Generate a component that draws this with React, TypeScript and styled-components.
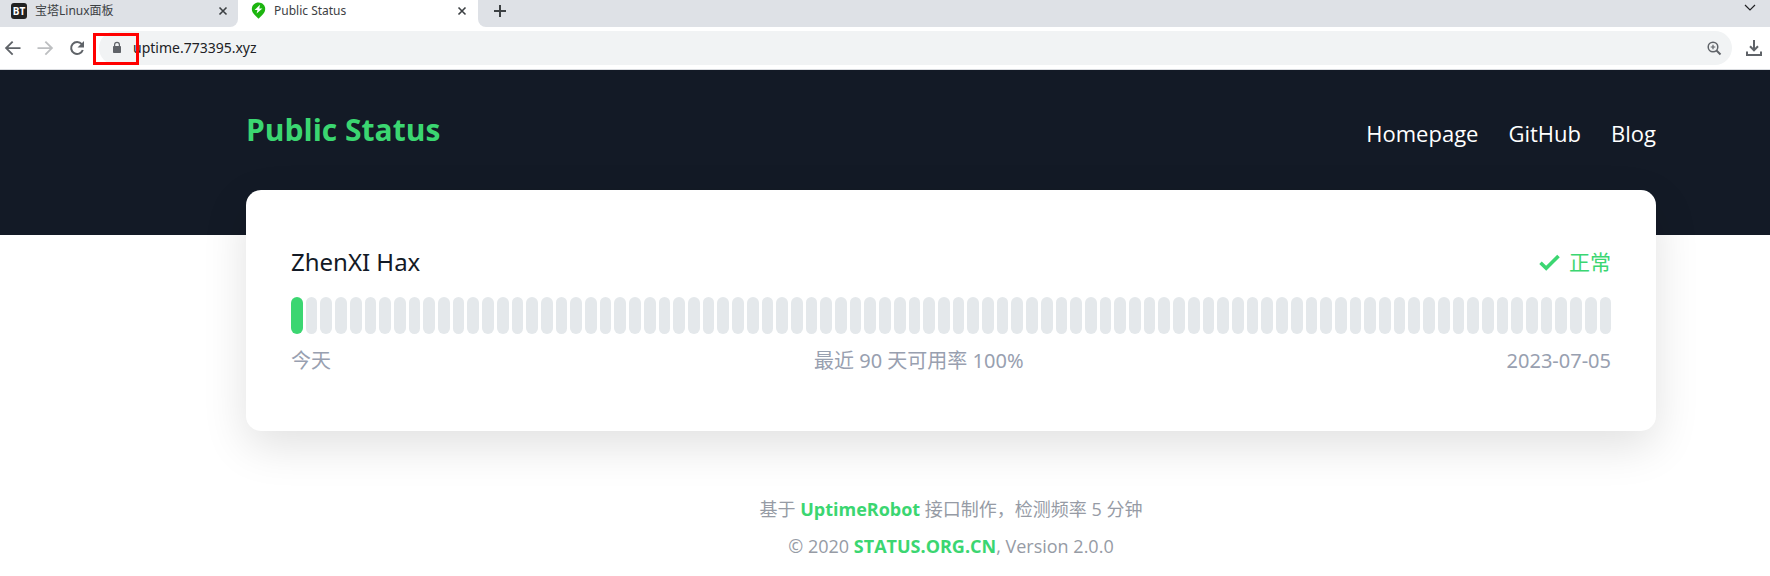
import React from "react";
import styled, { createGlobalStyle } from "styled-components";

const GlobalStyle = createGlobalStyle`
  * { box-sizing: border-box; }
  body {
    margin: 0;
    background: #fff;
    font-family: "Noto Sans", "Noto Sans CJK SC", sans-serif;
  }
  button { border: 0; padding: 0; background: none; font: inherit; color: inherit; }
`;

const TabStrip = styled.div`
  display: flex;
  height: 27px;
  background: #fff;
  color: #3c4043;
`;

const Tab = styled.div<{ $active?: boolean }>`
  display: flex;
  flex: 0 0 auto;
  align-items: center;
  width: ${(p) => (p.$active ? 240 : 238)}px;
  height: 27px;
  padding: 0 ${(p) => (p.$active ? 11 : 10)}px 6px ${(p) => (p.$active ? 13 : 11)}px;
  background: ${(p) => (p.$active ? "#fff" : "#dee1e6")};
  border-bottom-right-radius: ${(p) => (p.$active ? 0 : 8)}px;
`;

const TabTitle = styled.span`
  flex: 1;
  margin-left: 8px;
  font-size: 12px;
  line-height: 20px;
  white-space: nowrap;
`;

const StripRest = styled.div`
  display: flex;
  flex: 1;
  align-items: center;
  justify-content: space-between;
  padding: 0 13px 6px 15px;
  background: #dee1e6;
  border-bottom-left-radius: 8px;
`;

const IconButton = styled.button<{ $color?: string }>`
  display: flex;
  flex: 0 0 auto;
  color: ${(p) => p.$color ?? "#5f6368"};
`;

const Toolbar = styled.div`
  position: relative;
  display: flex;
  align-items: center;
  height: 43px;
  padding: 0 7px 0 4px;
  border-bottom: 1px solid #dadce0;
`;

const NavButtons = styled.div`
  display: flex;
  gap: 14px;
  margin-right: 13px;
`;

const AddressBar = styled.div`
  display: flex;
  flex: 1;
  align-items: center;
  height: 34px;
  margin-right: 13px;
  padding: 0 10px 0 12px;
  border-radius: 17px;
  background: #f1f3f4;
  color: #5f6368;
`;

const AddressInput = styled.input`
  flex: 1;
  min-width: 0;
  margin-left: 10px;
  padding: 0;
  border: 0;
  outline: 0;
  background: transparent;
  color: #202124;
  font-family: inherit;
  font-size: 14px;
  line-height: 20px;
`;

const Highlight = styled.div`
  position: absolute;
  left: 93px;
  top: 6px;
  width: 46px;
  height: 32px;
  border: 3px solid #f00;
`;

const Header = styled.header`
  height: 165px;
  padding: 0 114px 0 246px;
  background: #131a26;
`;

const HeaderRow = styled.div`
  display: flex;
  align-items: center;
  justify-content: space-between;
  height: 120px;
`;

const Title = styled.h1`
  margin: 0;
  color: #3bd671;
  font-family: "Open Sans", sans-serif;
  font-size: 30px;
  line-height: 40px;
  font-weight: 700;
`;

const SiteNav = styled.nav`
  display: flex;
  gap: 30px;
  padding-top: 6px;
`;

const SiteLink = styled.a`
  color: #fff;
  font-family: "Open Sans", sans-serif;
  font-size: 22px;
  line-height: 30px;
  text-decoration: none;
`;

const Main = styled.main`
  padding: 0 114px 0 246px;
  margin-top: -45px;
`;

const Card = styled.section`
  padding: 55px 45px 55px;
  border-radius: 15px;
  background: #fff;
  box-shadow: 0 15px 45px rgba(0, 0, 0, 0.12);
`;

const Row = styled.div`
  display: flex;
  align-items: center;
  justify-content: space-between;
`;

const SiteName = styled.h2`
  margin: 0;
  color: #131a26;
  font-size: 24px;
  line-height: 34px;
  font-weight: 400;
`;

const StatusLabel = styled.span`
  display: flex;
  align-items: center;
  gap: 9px;
  color: #3bd671;
  font-size: 21px;
  line-height: 34px;
`;

const Timeline = styled.div`
  display: flex;
  gap: 3px;
  height: 37px;
  margin: 18px 0 12px;
`;

const Day = styled.span<{ $up?: boolean }>`
  flex: 1;
  border-radius: 6px;
  background: ${(p) => (p.$up ? "#3bd671" : "#e4e8eb")};
`;

const Summary = styled(Row)`
  color: #98a0b0;
  font-size: 20px;
  line-height: 30px;
`;

const Footer = styled.footer`
  margin-top: 60px;
  color: #969ba5;
  font-family: "Open Sans", "Noto Sans CJK SC", sans-serif;
  font-size: 18px;
  line-height: 37px;
  text-align: center;

  p { margin: 0; }
  a { color: #3bd671; font-weight: 700; text-decoration: none; }
`;

const CloseIcon = () => (
  <svg width="10" height="10" viewBox="0 0 10 10" stroke="currentColor" strokeWidth="1.6">
    <path d="M1.5 1.5l7 7M8.5 1.5l-7 7" />
  </svg>
);

const PanelLogo = styled.span`
  width: 16px;
  height: 16px;
  border-radius: 3px;
  background: #222;
  color: #fff;
  font-size: 10px;
  line-height: 16px;
  font-weight: 700;
  text-align: center;
`;

const PinLogo = () => (
  <svg width="15" height="17" viewBox="0 0 15 17">
    <path d="M7.5 0.5C3.6.5.8 3.4.8 6.9c0 2.8 1.5 4.5 3.4 6.6l3.3 3.3 3.3-3.3c1.900-2.100 3.400-3.800 3.400-6.600C14.200 3.400 11.400.5 7.500.5z" fill="#1db510" />
    <path d="M9 2.800L3.600 8h2.900l-.9 3.600L11.400 6.400H8.300z" fill="#fff" />
  </svg>
);

const arrow = "M16.500 7.200H4.300l5-5L8 .9.800 8.100 8 15.300l1.300-1.300-5-5h12.200z";

export default function App() {
  return (
    <>
      <GlobalStyle />
      <TabStrip>
        <Tab>
          <PanelLogo>BT</PanelLogo>
          <TabTitle>宝塔Linux面板</TabTitle>
          <IconButton aria-label="Close tab" $color="#3c4043"><CloseIcon /></IconButton>
        </Tab>
        <Tab $active>
          <PinLogo />
          <TabTitle>Public Status</TabTitle>
          <IconButton aria-label="Close tab" $color="#3c4043"><CloseIcon /></IconButton>
        </Tab>
        <StripRest>
          <IconButton aria-label="New tab" $color="#3c4043">
            <svg width="14" height="14" viewBox="0 0 14 14" stroke="currentColor" strokeWidth="2">
              <path d="M7 1v12M1 7h12" />
            </svg>
          </IconButton>
          <IconButton aria-label="Search tabs" $color="#202124">
            <svg width="14" height="14" viewBox="0 0 14 14" fill="none" stroke="currentColor" strokeWidth="1.200">
              <path d="M2 1l5 5 5-5" />
            </svg>
          </IconButton>
        </StripRest>
      </TabStrip>

      <Toolbar>
        <NavButtons>
          <IconButton aria-label="Back">
            <svg width="18" height="16" viewBox="0 0 18 16" fill="currentColor"><path d={arrow} /></svg>
          </IconButton>
          <IconButton aria-label="Forward" $color="#bdbfc1">
            <svg width="18" height="16" viewBox="0 0 18 16" fill="currentColor">
              <path d={arrow} transform="matrix(-1 0 0 1 18 0)" />
            </svg>
          </IconButton>
          <IconButton aria-label="Reload">
            <svg width="18" height="16" viewBox="0 0 18 16">
              <path d="M13.800 4.200A6 6 0 1 0 14.800 10" fill="none" stroke="currentColor" strokeWidth="2" />
              <path d="M16 1v6.500H9.500z" fill="currentColor" />
            </svg>
          </IconButton>
        </NavButtons>
        <AddressBar>
          <IconButton aria-label="View site information">
            <svg width="12" height="14" viewBox="0 0 12 14">
              <rect x="2" y="5" width="8" height="7" rx="0.800" fill="currentColor" />
              <path d="M3.600 5V3.700a2.400 2.400 0 0 1 4.800 0V5" fill="none" stroke="currentColor" strokeWidth="1.200" />
            </svg>
          </IconButton>
          <AddressInput aria-label="Address" defaultValue="uptime.773395.xyz" />
          <IconButton aria-label="Zoom">
            <svg width="16" height="16" viewBox="0 0 16 16" fill="none" stroke="currentColor" strokeWidth="1.500">
              <circle cx="7" cy="7" r="4.800" />
              <path d="M10.500 10.500l4 4" strokeWidth="2" />
              <path d="M7 4.700v4.600M4.700 7h4.600" strokeWidth="1.200" />
            </svg>
          </IconButton>
        </AddressBar>
        <IconButton aria-label="Downloads">
          <svg width="18" height="18" viewBox="0 0 18 18" fill="none" stroke="currentColor" strokeWidth="2">
            <path d="M9 1v10M5 7.300l4 4 4-4M2 12.500V16h14v-3.500" />
          </svg>
        </IconButton>
        <Highlight />
      </Toolbar>

      <Header>
        <HeaderRow>
          <Title>Public Status</Title>
          <SiteNav>
            <SiteLink href="#home">Homepage</SiteLink>
            <SiteLink href="#github">GitHub</SiteLink>
            <SiteLink href="#blog">Blog</SiteLink>
          </SiteNav>
        </HeaderRow>
      </Header>

      <Main>
        <Card>
          <Row>
            <SiteName>ZhenXI Hax</SiteName>
            <StatusLabel>
              <svg width="21" height="17" viewBox="0 0 21 17" fill="none" stroke="currentColor" strokeWidth="3.600">
                <path d="M1.500 8.800l5.700 5.400L19.500 2" />
              </svg>
              正常
            </StatusLabel>
          </Row>
          <Timeline>
            {Array.from({ length: 90 }, (_, i) => <Day key={i} $up={i === 0} />)}
          </Timeline>
          <Summary>
            <span>今天</span>
            <span>最近 90 天可用率 100%</span>
            <time>2023-07-05</time>
          </Summary>
        </Card>
        <Footer>
          <p>基于 <a href="#uptimerobot">UptimeRobot</a> 接口制作，检测频率 5 分钟</p>
          <p>© 2020 <a href="#status">STATUS.ORG.CN</a>, Version 2.0.0</p>
        </Footer>
      </Main>
    </>
  );
}
